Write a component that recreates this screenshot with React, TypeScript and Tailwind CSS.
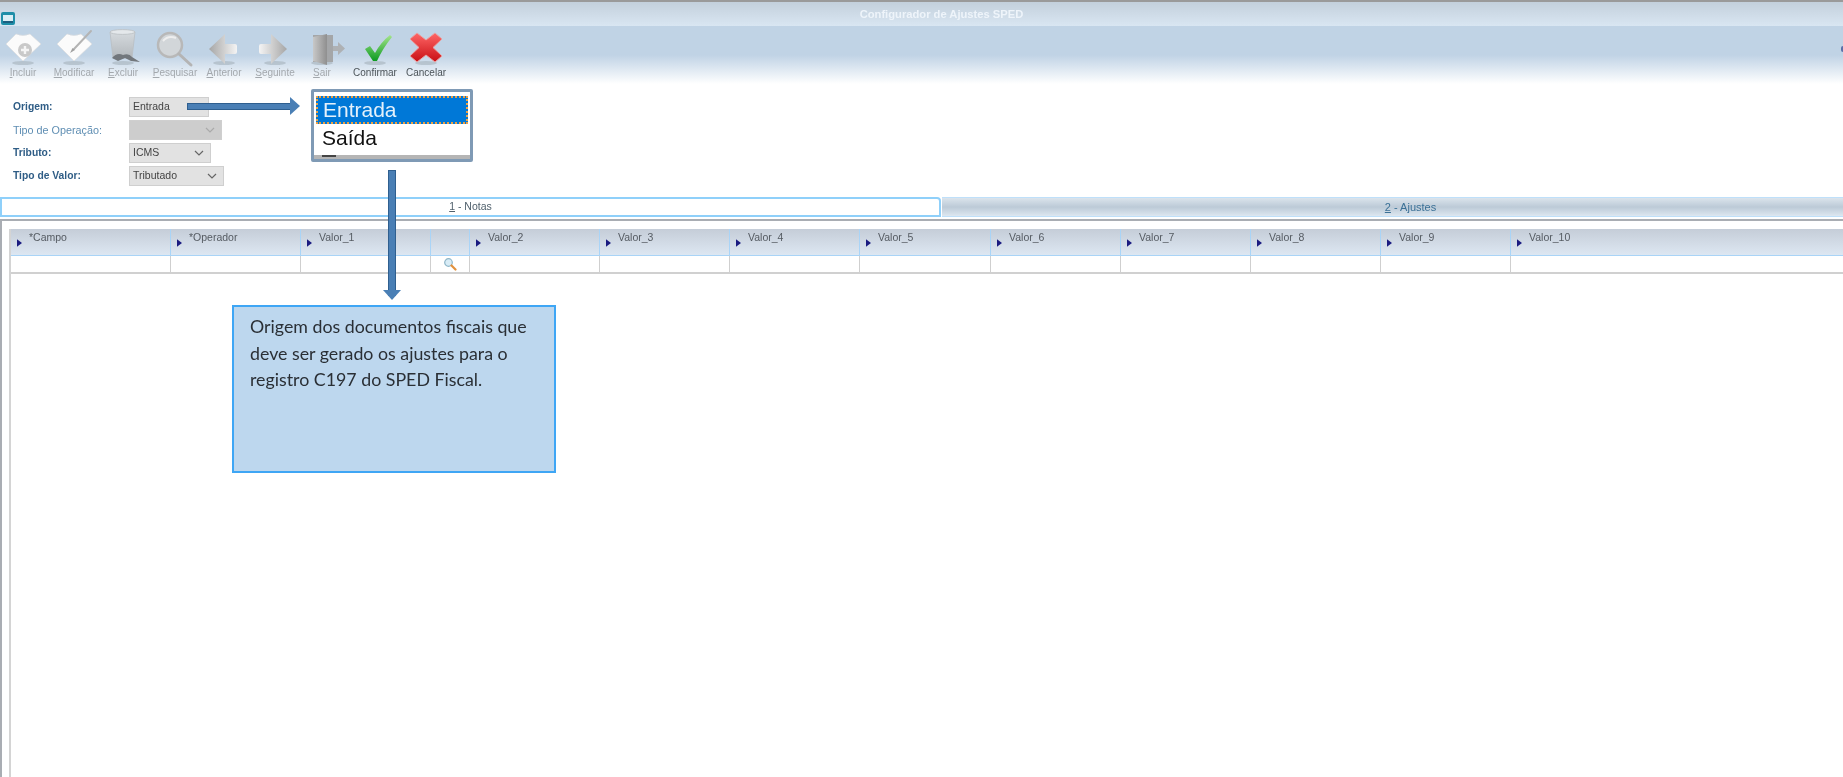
import React from "react";

const tools = [
  { label: "Incluir", key: "I", rest: "ncluir", w: "w-[46px]", on: false },
  { label: "Modificar", key: "M", rest: "odificar", w: "w-[56px]", on: false },
  { label: "Excluir", key: "E", rest: "xcluir", w: "w-[42px]", on: false },
  { label: "Pesquisar", key: "P", rest: "esquisar", w: "w-[62px]", on: false },
  { label: "Anterior", key: "A", rest: "nterior", w: "w-[36px]", on: false },
  { label: "Seguinte", key: "S", rest: "eguinte", w: "w-[66px]", on: false },
  { label: "Sair", key: "S", rest: "air", w: "w-[28px]", on: false },
  { label: "Confirmar", key: "C", rest: "onfirmar", w: "w-[78px]", on: true },
  { label: "Cancelar", key: "C", rest: "ancelar", w: "w-[24px]", on: true },
];

const columns = [
  { name: "*Campo", w: "w-[160px]" },
  { name: "*Operador", w: "w-[130px]" },
  { name: "Valor_1", w: "w-[130px]" },
  { name: "", w: "w-[39px]" },
  { name: "Valor_2", w: "w-[130px]" },
  { name: "Valor_3", w: "w-[130px]" },
  { name: "Valor_4", w: "w-[130px]" },
  { name: "Valor_5", w: "w-[131px]" },
  { name: "Valor_6", w: "w-[130px]" },
  { name: "Valor_7", w: "w-[130px]" },
  { name: "Valor_8", w: "w-[130px]" },
  { name: "Valor_9", w: "w-[130px]" },
  { name: "Valor_10", w: "flex-1" },
];

function ToolIcon({ name }: { name: string }) {
  const shadow = <ellipse cx="20" cy="35" rx="11" ry="2" fill="#8f9aa3" opacity="0.4" />;
  return (
    <svg width="40" height="40" viewBox="0 0 40 40" className="overflow-visible">
      <defs>
        <linearGradient id="toRight" x1="0" y1="0" x2="1" y2="0">
          <stop offset="0" stopColor="#f4f4f4" />
          <stop offset="1" stopColor="#a6a6a6" />
        </linearGradient>
        <linearGradient id="toLeft" x1="1" y1="0" x2="0" y2="0">
          <stop offset="0" stopColor="#f4f4f4" />
          <stop offset="1" stopColor="#a6a6a6" />
        </linearGradient>
        <linearGradient id="door" x1="0" y1="0" x2="1" y2="0">
          <stop offset="0" stopColor="#c8c8c8" />
          <stop offset="1" stopColor="#8f8f8f" />
        </linearGradient>
        <linearGradient id="glass" x1="0" y1="0" x2="0" y2="1">
          <stop offset="0" stopColor="#d5dade" />
          <stop offset="1" stopColor="#b3b8bc" />
        </linearGradient>
        <linearGradient id="green" x1="0" y1="0" x2="0" y2="1">
          <stop offset="0" stopColor="#a4e58c" />
          <stop offset="1" stopColor="#0c9a20" />
        </linearGradient>
        <linearGradient id="red" x1="0" y1="0" x2="0" y2="1">
          <stop offset="0" stopColor="#f66" />
          <stop offset="1" stopColor="#c80f14" />
        </linearGradient>
      </defs>
      {name !== "Pesquisar" && shadow}
      {name === "Incluir" && (
        <>
          <path d="M3 16 L13 6 Q20 9 27 6 L38 16 L20 33 Z" fill="#fbfbfb" stroke="#dcdcdc" strokeWidth="0.6" />
          <circle cx="22" cy="22" r="7" fill="#c9c9c9" />
          <path d="M22 18v8M18 22h8" stroke="#f5f5f5" strokeWidth="2.4" />
        </>
      )}
      {name === "Modificar" && (
        <>
          <path d="M3 16 L13 6 Q20 9 27 6 L38 16 L20 33 Z" fill="#fbfbfb" stroke="#dcdcdc" strokeWidth="0.6" />
          <path d="M20 21 L37 3" stroke="#b4b4b4" strokeWidth="2" strokeLinecap="round" />
          <path d="M16 25l2.5-5 2.5 2z" fill="#a0a0a0" />
        </>
      )}
      {name === "Excluir" && (
        <>
          <path d="M7 4 H32 L29 30 H10 Z" fill="url(#glass)" stroke="#b9bec2" strokeWidth="0.8" />
          <ellipse cx="19.5" cy="4" rx="12.5" ry="2.4" fill="#e4e8eb" stroke="#b9bec2" strokeWidth="0.8" />
          <path d="M9 30 Q14 24 20 27 Q26 25 29 29 L37 34 L28 33 L22 30 L15 33 Z" fill="#72777c" />
        </>
      )}
      {name === "Pesquisar" && (
        <>
          <circle cx="15" cy="17" r="12" fill="#d2d6d9" stroke="#b8b8b8" strokeWidth="2.5" />
          <path d="M8 13 Q13 7 21 10" stroke="#eee" strokeWidth="2" fill="none" />
          <path d="M24 26 L36 37" stroke="#b4b4b4" strokeWidth="3" strokeLinecap="round" />
        </>
      )}
      {name === "Anterior" && (
        <path d="M5 21 L21 6 V16 H31 Q33 16 33 18 V24 Q33 26 31 26 H21 V36 Z" fill="url(#toLeft)" />
      )}
      {name === "Seguinte" && (
        <path d="M4 18 Q4 16 6 16 H16 V6 L32 21 L16 36 V26 H6 Q4 26 4 24 Z" fill="url(#toRight)" />
      )}
      {name === "Sair" && (
        <>
          <path d="M11 7 H31 V34 H11 Z" fill="#a4a6a8" />
          <path d="M11 9 L25 6 V37 L11 33 Z" fill="url(#door)" />
          <path d="M31 18 H36 V14 L43 20.5 L36 27 V23 H31 Z" fill="#aeb1b4" />
        </>
      )}
      {name === "Confirmar" && <path d="M10 21 L15 18 L20 25 Q26 14 35 7 L37 9 Q28 20 22 33 H18 Z" fill="url(#green)" />}
      {name === "Cancelar" && (
        <path
          d="M11 5 L20 12 L29 5 L36 11 L27 19.5 L36 28 L29 34 L20 27 L11 34 L4 28 L13 19.5 L4 11 Z"
          fill="url(#red)"
          stroke="#e9a0a0"
          strokeWidth="1"
          strokeLinejoin="round"
        />
      )}
    </svg>
  );
}

function Combo({ value, w, hideArrow, disabled }: { value: string; w: string; hideArrow?: boolean; disabled?: boolean }) {
  return (
    <div
      className={`${w} h-[20px] flex items-center justify-between px-[3px] border border-[#cfcfcf] text-[10.5px] text-[#444] ${
        disabled ? "bg-[#cdcdcd]" : "bg-[#e2e2e2]"
      }`}
    >
      <span>{value}</span>
      {!hideArrow && (
        <svg width="10" height="6" viewBox="0 0 10 6" className="mr-[3px]">
          <path d="M1 1l4 4 4-4" fill="none" stroke={disabled ? "#aaa" : "#666"} strokeWidth="1.2" />
        </svg>
      )}
    </div>
  );
}

function FormRow({ label, bold, children }: { label: string; bold?: boolean; children: React.ReactNode }) {
  return (
    <div className="flex items-center h-[20px]">
      <span className={`w-[129px] pl-[13px] ${bold ? "text-[10.3px] font-bold text-[#2f5d86]" : "text-[10.8px] text-[#5f8eb3]"}`}>{label}</span>
      {children}
    </div>
  );
}

export default function App() {
  return (
    <div className="relative flex flex-col h-[777px] w-full overflow-hidden bg-white blur-[0.6px] font-['Liberation_Sans',Arial,sans-serif]">
      {/* title bar */}
      <div className="relative h-[26px] shrink-0 border-t-2 border-[#9a9a9a] bg-gradient-to-b from-[#c3d0dc] to-[#d9e6f2] flex items-center justify-center pl-[40px]">
        <span className="text-[11.2px] font-bold text-[#eef4fa]">Configurador de Ajustes SPED</span>
        <div className="absolute left-[1px] top-[10px] w-[14px] h-[13px] rounded-[2px] bg-[#1f8ea8] flex items-center justify-center">
          <div className="w-[10px] h-[8px] bg-[#dbeef5] border-b-2 border-[#1c5f80]" />
        </div>
      </div>

      {/* toolbar */}
      <div className="relative h-[58px] shrink-0 flex bg-gradient-to-b from-[#c0d3e5] from-50% to-white">
        {tools.map((t) => (
          <div key={t.label} className={`${t.w} shrink-0 flex flex-col items-center`}>
            <div className="h-[39px] pt-[2px]">
              <ToolIcon name={t.label} />
            </div>
            <span className={`whitespace-nowrap text-[10px] ${t.on ? "text-[#4c5459]" : "text-[#a3a8ad]"}`}>
              <span className={t.on ? "" : "underline"}>{t.key}</span>
              {t.rest}
            </span>
          </div>
        ))}
        <div className="absolute right-0 top-[20px] w-[2px] h-[6px] rounded-l-full bg-[#5a6fa8]" />
      </div>

      {/* form */}
      <div className="flex flex-col gap-[3px] pt-[13px] shrink-0">
        <FormRow label="Origem:" bold>
          <Combo value="Entrada" w="w-[80px]" hideArrow />
        </FormRow>
        <FormRow label="Tipo de Operação:">
          <Combo value="" w="w-[93px]" disabled />
        </FormRow>
        <FormRow label="Tributo:" bold>
          <Combo value="ICMS" w="w-[82px]" />
        </FormRow>
        <FormRow label="Tipo de Valor:" bold>
          <Combo value="Tributado" w="w-[95px]" />
        </FormRow>
      </div>

      {/* tabs */}
      <div className="flex h-[20px] mt-[11px] shrink-0 text-[10.5px]">
        <div className="w-[941px] border-2 border-[#8fd0fa] rounded-tr-[4px] flex items-center justify-center text-[#50606c]">
          <span>
            <span className="underline">1</span> - Notas
          </span>
        </div>
        <div className="flex-1 ml-[1px] border-y border-[#bfe0fa] bg-gradient-to-b from-[#dbe4ec] via-[#bccad7] to-[#dde7f0] flex items-center justify-center text-[#3a7096]">
          <span className="ml-[36px] text-[11px]">
            <span className="underline">2</span> - Ajustes
          </span>
        </div>
      </div>

      {/* grid */}
      <div className="flex-1 mt-[2px] border-t-2 border-l-2 border-[#a9adb3] pl-[7px] pt-[8px]">
        <div className="h-full border-l-2 border-[#d4d4d4]">
          <div className="flex h-[27px] bg-gradient-to-b from-[#c5cdd8] to-[#dde7f2] border-b border-[#a9d4f7]">
            {columns.map((c, i) => (
              <div key={i} className={`${c.w} shrink-0 relative border-r border-[#a9d4f7] last:border-r-0 text-[10.5px] text-[#555b62]`}>
                {c.name && (
                  <>
                    <svg width="5" height="8" viewBox="0 0 6 9" className="absolute left-[6px] top-[10px]">
                      <path d="M0 0l6 4.5L0 9z" fill="#1a1a80" />
                    </svg>
                    <span className="absolute left-[18px] top-[1px]">{c.name}</span>
                  </>
                )}
              </div>
            ))}
          </div>
          <div className="flex h-[18px] border-b-2 border-[#d0d0d0]">
            {columns.map((c, i) => (
              <div key={i} className={`${c.w} shrink-0 border-r border-[#cfcfcf] last:border-r-0 flex items-center justify-center`}>
                {i === 3 && (
                  <svg width="14" height="14" viewBox="0 0 14 14">
                    <circle cx="5.5" cy="5.5" r="3.8" fill="#d8ecf6" stroke="#8fb6c8" strokeWidth="1.2" />
                    <path d="M8.5 8.5l4 4" stroke="#e2913c" strokeWidth="2.2" strokeLinecap="round" />
                  </svg>
                )}
              </div>
            ))}
          </div>
        </div>
      </div>

      {/* dropdown popup shown on the annotation */}
      <div className="absolute left-[311px] top-[89px] w-[162px] h-[73px] border-[3px] border-[#7f9ab5] rounded-[2px] bg-white overflow-hidden">
        <div className="mx-[2px] mt-[4px] h-[28px] bg-[#0078d7] border-2 border-dotted border-[#f0a040] pl-[5px] flex items-center text-[21px] text-[#e4f1fb]">
          Entrada
        </div>
        <div className="h-[28px] pl-[8px] flex items-center text-[21px] text-[#111]">Saída</div>
        <div className="absolute left-0 right-0 bottom-0 h-[4px] bg-[#b5b5b5]">
          <div className="ml-[8px] w-[14px] h-[2px] bg-[#444]" />
        </div>
      </div>

      {/* arrows */}
      <div className="absolute left-[187px] top-[103px] w-[104px] h-[7px] bg-[#4a7fb5] border border-[#2f5f8f]" />
      <div className="absolute left-[290px] top-[97px] w-0 h-0 border-y-[9px] border-y-transparent border-l-[10px] border-l-[#4a7fb5]" />
      <div className="absolute left-[388px] top-[170px] w-[8px] h-[126px] bg-[#4a7fb5] border border-[#2f5f8f]" />
      <div className="absolute left-[383px] top-[290px] w-0 h-0 border-x-[9.5px] border-x-transparent border-t-[10px] border-t-[#4a7fb5]" />

      {/* callout */}
      <div className="absolute left-[232px] top-[305px] w-[324px] h-[168px] bg-[#bdd7ee] border-2 border-[#3ea6f5] pl-[16px] pt-[6px] font-['Lato',sans-serif] text-[17.8px] leading-[26.5px] text-[#2a2f35]">
        Origem dos documentos fiscais que
        <br />
        deve ser gerado os ajustes para o
        <br />
        registro C197 do SPED Fiscal.
      </div>
    </div>
  );
}
